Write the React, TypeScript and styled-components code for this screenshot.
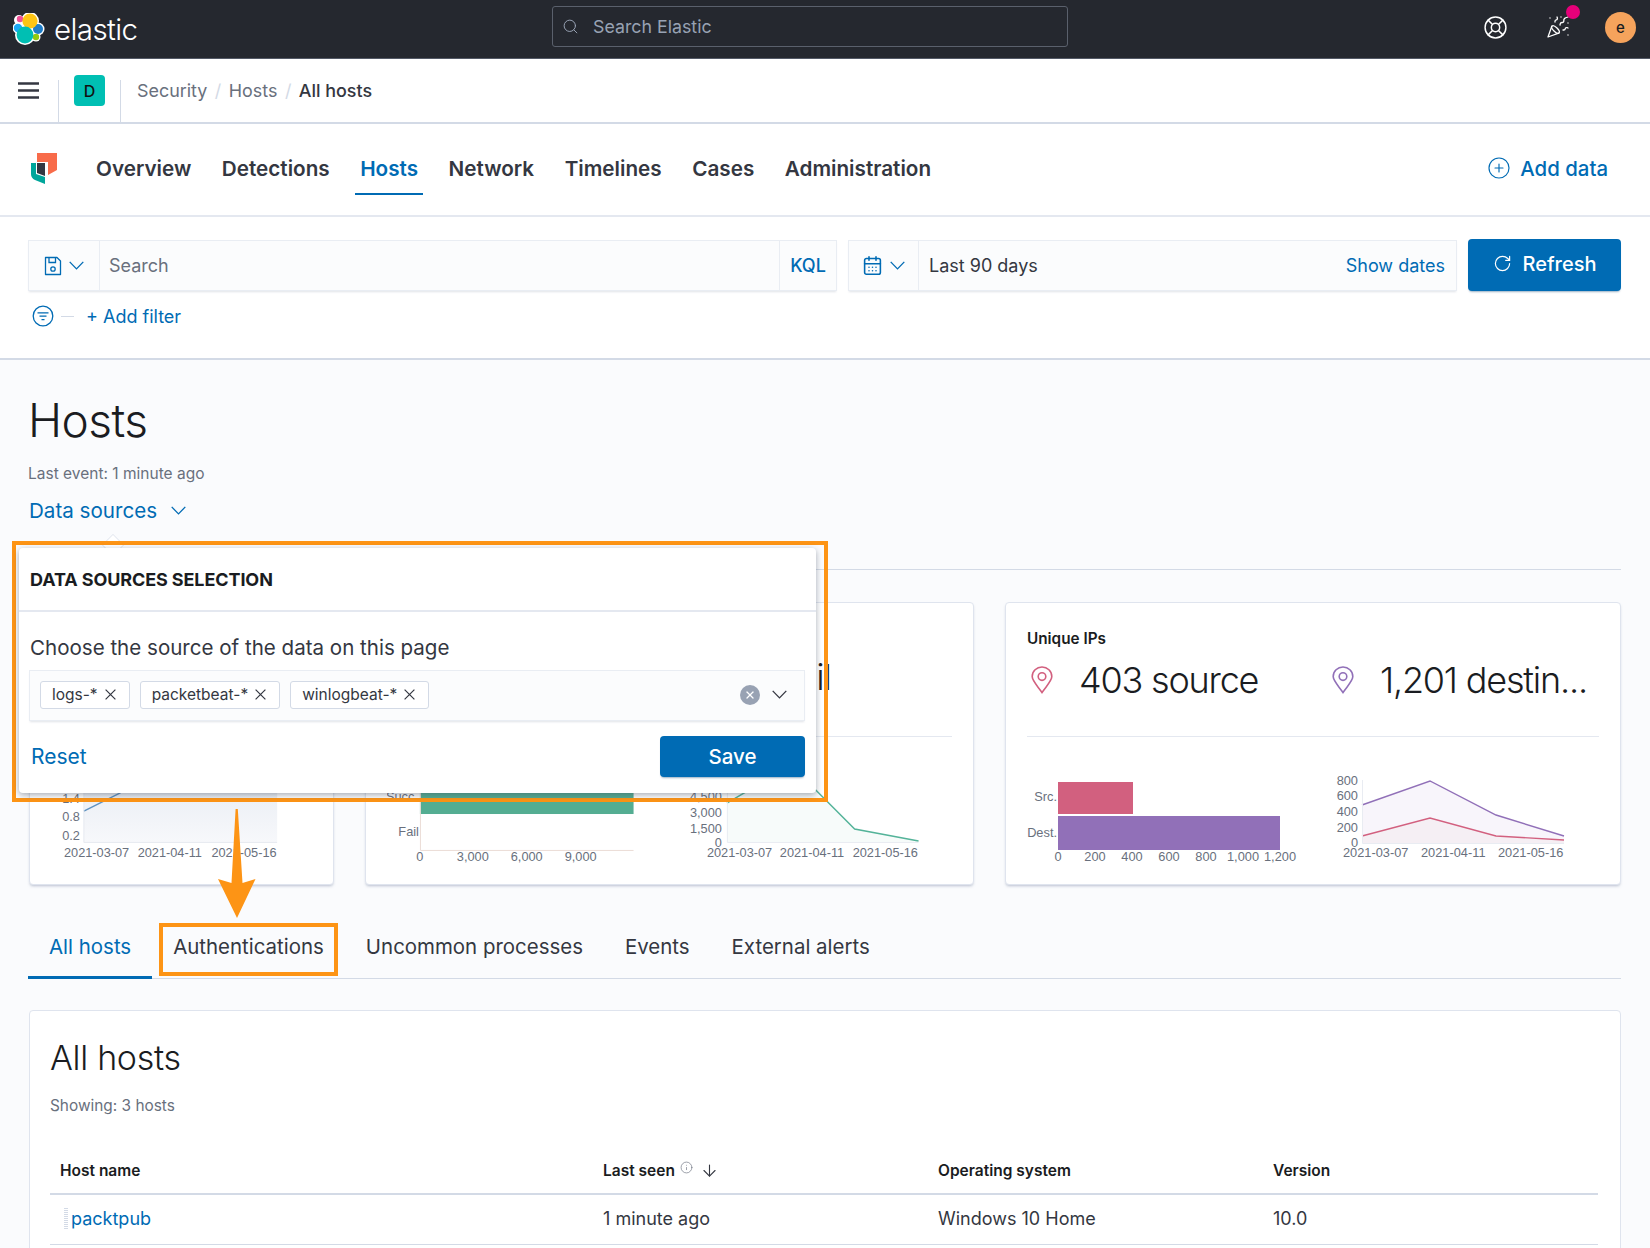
import React from "react";
import styled, { createGlobalStyle } from "styled-components";
import {
  ArrowDown,
  CalendarDays,
  CirclePlus,
  Info,
  LifeBuoy,
  PartyPopper,
  RotateCw,
  Search,
  X,
} from "lucide-react";

const BLUE = "#006bb4";
const ORANGE = "#fd9415";
const INK = "#343741";
const MUTED = "#69707d";
const LINE = "#d3dae6";

const GlobalStyle = createGlobalStyle`
  html, body {
    margin: 0;
    padding: 0;
    background: #fff;
    font-family: Inter, "Liberation Sans", sans-serif;
    color: ${INK};
  }
  * { box-sizing: border-box; }
`;

const ElasticLogo = () => (
  <svg width="32" height="32" viewBox="13 12 32 32">
    <circle cx="30" cy="20" r="9" fill="#fff" />
    <circle cx="25" cy="34" r="10" fill="#fff" />
    <circle cx="19" cy="19" r="5" fill="#fff" />
    <circle cx="18" cy="27" r="5.5" fill="#fff" />
    <circle cx="38" cy="28" r="6.5" fill="#fff" />
    <circle cx="36" cy="36" r="4.5" fill="#fff" />
    <circle cx="20" cy="18" r="3.2" fill="#ee5097" />
    <circle cx="18" cy="27" r="4.2" fill="#1ba9f5" />
    <circle cx="38" cy="28" r="5" fill="#1e7dc8" />
    <circle cx="36" cy="36" r="3.2" fill="#93c90e" />
    <circle cx="30" cy="20" r="7.6" fill="#fec514" />
    <circle cx="25" cy="34" r="8.4" fill="#00bfb3" />
  </svg>
);

const SecurityLogo = () => (
  <svg width="26" height="32" viewBox="31 154 26 32">
    <path d="M37 154H57V171L48 176V163H37Z" fill="#f86b4a" />
    <path d="M31 164H36V175L45 178V185L35 181Q31 179 31 175Z" fill="#00a69b" />
    <path d="M37 164H45V177L37 174Z" fill="#343741" />
  </svg>
);

const Hamburger = () => (
  <svg width="21" height="17" viewBox="0 0 21 17" fill="none" stroke={INK} strokeWidth="2.4">
    <path d="M0 1.5H21M0 8.5H21M0 15.5H21" />
  </svg>
);

const Chevron = ({ color = BLUE, width = 15 }: { color?: string; width?: number }) => (
  <svg width={width} height={width * 0.6} viewBox="0 0 15 9" fill="none" stroke={color} strokeWidth="1.3">
    <path d="M0.7 0.9L7.5 7.9L14.3 0.9" />
  </svg>
);

const Cross = () => (
  <svg width="11" height="11" viewBox="0 0 11 11" fill="none" stroke={INK} strokeWidth="1.2">
    <path d="M0.6 0.6L10.4 10.4M10.4 0.6L0.6 10.4" />
  </svg>
);

const FloppyIcon = () => (
  <svg width="18" height="20" viewBox="0 0 18 20" fill="none" stroke={BLUE} strokeWidth="1.3">
    <path d="M1.5 1.5H13L16.5 5V18.5H1.5Z" strokeLinejoin="round" />
    <path d="M5 1.5V6.5H11.5V1.5" />
    <circle cx="9" cy="13" r="2.2" />
  </svg>
);

const FilterIcon = () => (
  <svg width="22" height="22" viewBox="0 0 22 22" fill="none" stroke={BLUE} strokeWidth="1.3">
    <circle cx="11" cy="11" r="9.8" />
    <path d="M5.5 7.8H16.5M7.5 11.2H14.5M9.5 14.6H12.5" />
  </svg>
);

const PinIcon = ({ color }: { color: string }) => (
  <PinSvg width="22" height="28" viewBox="0 0 22 28" fill="none" stroke={color} strokeWidth="1.6">
    <path d="M11 26.5C7 20.5 1.2 15 1.2 10.6C1.2 5.2 5.6 1 11 1C16.4 1 20.8 5.2 20.8 10.6C20.8 15 15 20.5 11 26.5Z" />
    <circle cx="11" cy="10.6" r="3.8" />
  </PinSvg>
);

const HostsChart = () => (
  <svg width="262" height="100" viewBox="51 770 262 100">
    <defs>
      <linearGradient id="hostsFill" x1="0" y1="0" x2="0" y2="1">
        <stop offset="0" stopColor="#e6ebf2" />
        <stop offset="1" stopColor="#f7f8fb" />
      </linearGradient>
    </defs>
    <rect x="84" y="770" width="194" height="72" fill="url(#hostsFill)" />
    <path d="M84 811L120 793L150 770" fill="none" stroke="#6092c0" strokeWidth="1.4" />
    <path d="M84 770V842.5H278" fill="none" stroke="#e6e9f0" />
    <AxisText x="80" y="803" textAnchor="end">1.4</AxisText>
    <AxisText x="80" y="821" textAnchor="end">0.8</AxisText>
    <AxisText x="80" y="840" textAnchor="end">0.2</AxisText>
    <AxisText x="64" y="857">2021-03-07</AxisText>
    <AxisText x="138" y="857">2021-04-11</AxisText>
    <AxisText x="212" y="857">2021-05-16</AxisText>
  </svg>
);

const AuthBars = () => (
  <svg width="273" height="100" viewBox="387 770 273 100">
    <rect x="420" y="770" width="214" height="44" fill="#54ad92" />
    <path d="M420.5 770V850.5H634" fill="none" stroke="#ebdcd6" />
    <AxisText x="418" y="801" textAnchor="end">Succ.</AxisText>
    <AxisText x="419" y="836" textAnchor="end">Fail</AxisText>
    <AxisText x="420" y="861" textAnchor="middle">0</AxisText>
    <AxisText x="473" y="861" textAnchor="middle">3,000</AxisText>
    <AxisText x="527" y="861" textAnchor="middle">6,000</AxisText>
    <AxisText x="581" y="861" textAnchor="middle">9,000</AxisText>
  </svg>
);

const AuthLines = () => (
  <svg width="293" height="100" viewBox="660 770 293 100">
    <path d="M727 803L756 786L812 786L855 829L919 841V842H727Z" fill="#f7fbfa" />
    <path d="M727 803L756 786L812 786L855 829L919 841" fill="none" stroke="#54b399" strokeWidth="1.4" />
    <path d="M727.5 780V842.5H919" fill="none" stroke="#e9ecf2" />
    <AxisText x="722" y="801" textAnchor="end">4,500</AxisText>
    <AxisText x="722" y="817" textAnchor="end">3,000</AxisText>
    <AxisText x="722" y="833" textAnchor="end">1,500</AxisText>
    <AxisText x="722" y="847" textAnchor="end">0</AxisText>
    <AxisText x="707" y="857">2021-03-07</AxisText>
    <AxisText x="780" y="857">2021-04-11</AxisText>
    <AxisText x="853" y="857">2021-05-16</AxisText>
  </svg>
);

const IpBars = () => (
  <svg width="293" height="100" viewBox="1027 770 293 100">
    <rect x="1058" y="782" width="75" height="32" fill="#d2607f" />
    <rect x="1058" y="816" width="222" height="34" fill="#9170b8" />
    <AxisText x="1057" y="801" textAnchor="end">Src.</AxisText>
    <AxisText x="1057" y="837" textAnchor="end">Dest.</AxisText>
    {[
      [1058, "0"],
      [1095, "200"],
      [1132, "400"],
      [1169, "600"],
      [1206, "800"],
      [1243, "1,000"],
      [1280, "1,200"],
    ].map(([x, label]) => (
      <AxisText key={label} x={x} y="861" textAnchor="middle">
        {label}
      </AxisText>
    ))}
  </svg>
);

const IpLines = () => (
  <svg width="263" height="100" viewBox="1335 770 263 100">
    <path d="M1362 805L1430 781L1496 815L1564 836V843H1362Z" fill="#f8f5fb" />
    <path d="M1362 836L1430 818L1496 836L1564 840V843H1362Z" fill="#f5eff4" />
    <path d="M1362 805L1430 781L1496 815L1564 836" fill="none" stroke="#9170b8" strokeWidth="1.4" />
    <path d="M1362 836L1430 818L1496 836L1564 840" fill="none" stroke="#d2607f" strokeWidth="1.4" />
    <path d="M1362.5 780V843.5H1564" fill="none" stroke="#e9ecf2" />
    <AxisText x="1358" y="785" textAnchor="end">800</AxisText>
    <AxisText x="1358" y="800" textAnchor="end">600</AxisText>
    <AxisText x="1358" y="816" textAnchor="end">400</AxisText>
    <AxisText x="1358" y="832" textAnchor="end">200</AxisText>
    <AxisText x="1358" y="847" textAnchor="end">0</AxisText>
    <AxisText x="1343" y="857">2021-03-07</AxisText>
    <AxisText x="1421" y="857">2021-04-11</AxisText>
    <AxisText x="1498" y="857">2021-05-16</AxisText>
  </svg>
);

export default function App() {
  return (
    <Page>
      <GlobalStyle />
      <TopBar>
        <Brand>
          <ElasticLogo />
          <BrandName>elastic</BrandName>
        </Brand>
        <GlobalSearch>
          <Search size={17} strokeWidth={1.4} color="#98a2b3" />
          Search Elastic
        </GlobalSearch>
        <TopIcons>
          <LifeBuoy size={25} strokeWidth={1.4} color="#fff" />
          <NewsIcon>
            <PartyPopper size={24} strokeWidth={1.3} color="#fff" />
            <NewsDot />
          </NewsIcon>
          <Avatar>e</Avatar>
        </TopIcons>
      </TopBar>

      <CrumbBar>
        <MenuCell>
          <Hamburger />
        </MenuCell>
        <SpaceCell>
          <SpaceBadge>D</SpaceBadge>
        </SpaceCell>
        <Crumbs>
          <Crumb>Security</Crumb>
          <CrumbSlash>/</CrumbSlash>
          <Crumb>Hosts</Crumb>
          <CrumbSlash>/</CrumbSlash>
          <Crumb $current>All hosts</Crumb>
        </Crumbs>
      </CrumbBar>

      <SubNav>
        <SecurityLogo />
        <NavTabs>
          <NavTab>Overview</NavTab>
          <NavTab>Detections</NavTab>
          <NavTab $active>Hosts</NavTab>
          <NavTab>Network</NavTab>
          <NavTab>Timelines</NavTab>
          <NavTab>Cases</NavTab>
          <NavTab>Administration</NavTab>
        </NavTabs>
        <AddData>
          <CirclePlus size={24} strokeWidth={1.15} color={BLUE} />
          Add data
        </AddData>
      </SubNav>

      <QuerySection>
        <QueryRow>
          <SearchGroup>
            <Prepend $width={71}>
              <FloppyIcon />
              <Chevron />
            </Prepend>
            <QueryInput>Search</QueryInput>
            <KqlCell>KQL</KqlCell>
          </SearchGroup>
          <DateGroup>
            <Prepend $width={70}>
              <CalendarDays size={21} strokeWidth={1.8} color={BLUE} />
              <Chevron />
            </Prepend>
            <DateValue>Last 90 days</DateValue>
            <ShowDates>Show dates</ShowDates>
          </DateGroup>
          <RefreshButton>
            <RotateCw size={19} strokeWidth={1.5} color="#fff" />
            Refresh
          </RefreshButton>
        </QueryRow>
        <FilterRow>
          <FilterIcon />
          <FilterDash />
          <AddFilter>+ Add filter</AddFilter>
        </FilterRow>
      </QuerySection>

      <Main>
        <PageTitle>Hosts</PageTitle>
        <LastEvent>Last event: 1 minute ago</LastEvent>
        <DataSources>
          Data sources
          <Chevron />
        </DataSources>
        <Rule />

        <Cards>
          <Card>
            <StatRow />
            <CardRule />
            <ChartRow>
              <HostsChart />
            </ChartRow>
          </Card>
          <Card>
            <StatRow>
              <FailStat>0 fail</FailStat>
            </StatRow>
            <CardRule />
            <ChartRow>
              <AuthBars />
              <AuthLines />
            </ChartRow>
          </Card>
          <Card>
            <CardTitle>Unique IPs</CardTitle>
            <IpStats>
              <IpStat $width={301}>
                <PinIcon color="#d2607f" />
                <StatValue>403 source</StatValue>
              </IpStat>
              <IpStat $width={266}>
                <PinIcon color="#9170b8" />
                <StatValue>1,201 destin...</StatValue>
              </IpStat>
            </IpStats>
            <CardRule />
            <ChartRow $gap={15}>
              <IpBars />
              <IpLines />
            </ChartRow>
          </Card>
        </Cards>

        <Tabs>
          <Tab $active>All hosts</Tab>
          <Tab $highlight>Authentications</Tab>
          <Tab>Uncommon processes</Tab>
          <Tab>Events</Tab>
          <Tab>External alerts</Tab>
        </Tabs>

        <TablePanel>
          <TableTitle>All hosts</TableTitle>
          <Showing>Showing: 3 hosts</Showing>
          <HeadRow>
            <HeadCell>Host name</HeadCell>
            <HeadCell>
              Last seen
              <InfoMark>
                <Info size={13} strokeWidth={1.2} color={MUTED} />
              </InfoMark>
              <ArrowDown size={19} strokeWidth={1.4} color={INK} />
            </HeadCell>
            <HeadCell>Operating system</HeadCell>
            <HeadCell>Version</HeadCell>
          </HeadRow>
          <BodyRow>
            <HostCell>
              <DragHandle />
              <HostLink>packtpub</HostLink>
            </HostCell>
            <BodyCell>1 minute ago</BodyCell>
            <BodyCell>Windows 10 Home</BodyCell>
            <BodyCell>10.0</BodyCell>
          </BodyRow>
        </TablePanel>
      </Main>

      <PopoverBeak />
      <CalloutFrame>
        <Popover>
          <PopoverTitle>DATA SOURCES SELECTION</PopoverTitle>
          <PopoverBody>
            <ComboLabel>Choose the source of the data on this page</ComboLabel>
            <ComboBox>
              <Chip>
                logs-* <Cross />
              </Chip>
              <Chip>
                packetbeat-* <Cross />
              </Chip>
              <Chip>
                winlogbeat-* <Cross />
              </Chip>
              <ComboControls>
                <ClearBadge>
                  <X size={12} strokeWidth={2.6} color="#fff" />
                </ClearBadge>
                <Chevron color={INK} />
              </ComboControls>
            </ComboBox>
            <PopoverFooter>
              <ResetLink>Reset</ResetLink>
              <SaveButton>Save</SaveButton>
            </PopoverFooter>
          </PopoverBody>
        </Popover>
      </CalloutFrame>
      <CalloutArrow width="42" height="112" viewBox="216 808 42 112">
        <path d="M235.6 809H237.8L242.5 883L255.5 879L237 918L218 879L231.5 883Z" fill={ORANGE} />
      </CalloutArrow>
    </Page>
  );
}

const Page = styled.div`
  position: relative;
  height: 100vh;
  overflow: hidden;
  background: #fff;
`;

const AxisText = styled.text`
  font-family: "Liberation Sans", Arial, sans-serif;
  font-size: 12.8px;
  fill: ${MUTED};
`;

const PinSvg = styled.svg`
  flex: none;
`;

const TopBar = styled.header`
  display: flex;
  align-items: center;
  height: 59px;
  background: #25282f;
  border-bottom: 1px solid #535966;
`;

const Brand = styled.div`
  display: flex;
  align-items: center;
  gap: 9px;
  width: 552px;
  padding-left: 13px;
`;

const BrandName = styled.span`
  font-size: 29.5px;
  font-weight: 300;
  letter-spacing: -0.6px;
  color: #fff;
`;

const GlobalSearch = styled.div`
  display: flex;
  align-items: center;
  gap: 14px;
  width: 516px;
  height: 41px;
  margin-top: -5px;
  padding-left: 9px;
  border: 1px solid #5a606c;
  border-radius: 3px;
  font-size: 17.8px;
  color: #98a2b3;
`;

const TopIcons = styled.div`
  display: flex;
  align-items: center;
  gap: 38px;
  margin-left: auto;
  padding-right: 14px;
  margin-top: -4px;
`;

const NewsIcon = styled.div`
  position: relative;
  display: flex;
`;

const NewsDot = styled.span`
  position: absolute;
  top: -10px;
  right: -10px;
  width: 14px;
  height: 14px;
  border-radius: 50%;
  background: #e6007a;
`;

const Avatar = styled.div`
  display: flex;
  align-items: center;
  justify-content: center;
  width: 31px;
  height: 31px;
  margin-left: -3px;
  border-radius: 50%;
  background: #f5a35c;
  font-size: 15px;
  font-weight: 500;
  color: #1a1c21;
`;

const CrumbBar = styled.div`
  display: flex;
  align-items: flex-end;
  height: 65px;
  border-bottom: 2px solid ${LINE};
`;

const MenuCell = styled.div`
  display: flex;
  align-items: center;
  justify-content: center;
  width: 59px;
  height: 42px;
  padding: 0 2px 21px 0;
  border-right: 1px solid ${LINE};
`;

const SpaceCell = styled.div`
  display: flex;
  justify-content: center;
  width: 62px;
  height: 42px;
  border-right: 1px solid ${LINE};
`;

const SpaceBadge = styled.div`
  display: flex;
  align-items: center;
  justify-content: center;
  width: 31px;
  height: 31px;
  margin-top: -5px;
  border-radius: 4px;
  background: #00bfb3;
  font-size: 16px;
  font-weight: 500;
  color: #111;
`;

const Crumbs = styled.nav`
  display: flex;
  align-items: center;
  align-self: center;
  gap: 7.5px;
  padding-left: 16px;
  font-size: 17.9px;
`;

const Crumb = styled.span<{ $current?: boolean }>`
  color: ${(p) => (p.$current ? INK : MUTED)};
  font-weight: ${(p) => (p.$current ? 500 : 400)};
`;

const CrumbSlash = styled.span`
  color: ${LINE};
`;

const SubNav = styled.div`
  display: flex;
  align-items: flex-start;
  height: 93px;
  padding: 29px 42px 0 31px;
  border-bottom: 2px solid #e4e8f0;
`;

const NavTabs = styled.nav`
  display: flex;
  gap: 20.5px;
  margin: 4px 0 0 34px;
`;

const NavTab = styled.a<{ $active?: boolean }>`
  padding: 0 5px 12px;
  line-height: 24px;
  font-size: 20.7px;
  font-weight: 600;
  color: ${(p) => (p.$active ? BLUE : INK)};
  border-bottom: 2px solid ${(p) => (p.$active ? BLUE : "transparent")};
`;

const AddData = styled.a`
  display: flex;
  align-items: center;
  gap: 9px;
  height: 24px;
  margin: 3px 0 0 auto;
  font-size: 20.4px;
  font-weight: 500;
  color: ${BLUE};
`;

const QuerySection = styled.section`
  height: 143px;
  padding: 23px 29px 0 28px;
  border-bottom: 2px solid ${LINE};
`;

const QueryRow = styled.div`
  display: flex;
  gap: 11px;
  height: 51px;
`;

const FieldGroup = styled.div`
  display: flex;
  align-items: stretch;
  background: #fbfcfd;
  border: 1px solid #e9edf3;
  box-shadow: 0 2px 2px -1px rgba(152, 162, 179, 0.3);
`;

const SearchGroup = styled(FieldGroup)`
  width: 809px;
`;

const DateGroup = styled(FieldGroup)`
  flex: 1;
`;

const Prepend = styled.div<{ $width: number }>`
  display: flex;
  align-items: center;
  justify-content: center;
  gap: 7px;
  width: ${(p) => p.$width}px;
  padding-right: 1px;
  border-right: 1px solid #e9edf3;
`;

const QueryInput = styled.div`
  flex: 1;
  align-self: center;
  padding-left: 9px;
  font-size: 18px;
  color: ${MUTED};
`;

const KqlCell = styled.div`
  display: flex;
  align-items: center;
  justify-content: center;
  width: 57px;
  border-left: 1px solid #e9edf3;
  font-size: 18px;
  font-weight: 500;
  color: ${BLUE};
`;

const DateValue = styled.div`
  flex: 1;
  align-self: center;
  padding-left: 10px;
  font-size: 18px;
  color: ${INK};
`;

const ShowDates = styled.a`
  align-self: center;
  padding-right: 11px;
  font-size: 18px;
  color: ${BLUE};
`;

const RefreshButton = styled.button`
  display: flex;
  align-items: center;
  justify-content: center;
  gap: 11px;
  width: 153px;
  height: 52px;
  margin-top: -1px;
  padding-bottom: 4px;
  border: 0;
  border-radius: 4px;
  background: ${BLUE};
  box-shadow: 0 2px 2px -1px rgba(0, 60, 110, 0.4);
  font: 500 20px Inter, sans-serif;
  color: #fff;
`;

const FilterRow = styled.div`
  display: flex;
  align-items: center;
  height: 22px;
  margin-top: 14px;
  padding-left: 4px;
`;

const FilterDash = styled.span`
  width: 13px;
  height: 1px;
  margin: 0 12px 0 7px;
  background: ${LINE};
`;

const AddFilter = styled.a`
  font-size: 18px;
  color: ${BLUE};
`;

const Main = styled.main`
  height: 888px;
  padding: 32px 29px 0 28px;
  background: #fafbfd;
`;

const PageTitle = styled.h1`
  margin: 0;
  line-height: 56px;
  font-size: 46px;
  font-weight: 300;
  letter-spacing: -0.5px;
  color: #1a1c21;
`;

const LastEvent = styled.div`
  margin-top: 16px;
  line-height: 20px;
  font-size: 15.5px;
  color: ${MUTED};
`;

const DataSources = styled.a`
  display: flex;
  align-items: center;
  gap: 14px;
  height: 26px;
  margin: 13px 0 0 1px;
  font-size: 20.6px;
  color: ${BLUE};
`;

const Rule = styled.hr`
  margin: 46px 0 0;
  border: 0;
  border-top: 1px solid ${LINE};
`;

const Cards = styled.div`
  display: grid;
  grid-template-columns: 305px 609px 1fr;
  gap: 31px;
  height: 283px;
  margin: 32px 0 0 1px;
`;

const Card = styled.article`
  padding: 27px 21px 0;
  background: #fff;
  border: 1px solid #dfe4ee;
  border-radius: 4px;
  box-shadow: 0 2px 3px -1px rgba(130, 142, 170, 0.55);
`;

const StatRow = styled.div`
  display: flex;
  height: 106px;
  padding-top: 24px;
`;

const FailStat = styled.span`
  margin-left: 370px;
  font-size: 36px;
  font-weight: 300;
  letter-spacing: -1.2px;
  line-height: 46px;
  color: #1a1c21;
`;

const CardTitle = styled.h3`
  margin: 0;
  line-height: 18px;
  font-size: 15.3px;
  font-weight: 600;
  color: #1a1c21;
`;

const IpStats = styled.div`
  display: flex;
  align-items: center;
  height: 88px;
  padding-bottom: 25px;
`;

const IpStat = styled.div<{ $width: number }>`
  display: flex;
  align-items: center;
  gap: 26px;
  width: ${(p) => p.$width}px;
  flex: none;
  padding-left: 4px;
`;

const StatValue = styled.span`
  font-size: 36px;
  font-weight: 300;
  letter-spacing: -1.2px;
  white-space: nowrap;
  color: #1a1c21;
`;

const CardRule = styled.hr`
  margin: 0;
  border: 0;
  border-top: 1px solid #e4e8f0;
`;

const ChartRow = styled.div<{ $gap?: number }>`
  display: flex;
  gap: ${(p) => p.$gap ?? 0}px;
  margin-top: 33px;
`;

const Tabs = styled.div`
  display: flex;
  height: 58px;
  margin-top: 36px;
  border-bottom: 1px solid ${LINE};
`;

const Tab = styled.a<{ $active?: boolean; $highlight?: boolean }>`
  position: relative;
  height: 58px;
  padding: 12px 21px 0;
  line-height: 28px;
  font-size: 20.45px;
  color: ${(p) => (p.$active ? BLUE : INK)};
  border-bottom: 3px solid ${(p) => (p.$active ? BLUE : "transparent")};

  ${(p) =>
    p.$highlight &&
    `&::after {
      content: "";
      position: absolute;
      inset: 2px 7px 0;
      border: 4px solid ${ORANGE};
    }`}
`;

const TablePanel = styled.section`
  height: 260px;
  margin: 31px 0 0 1px;
  padding: 25px 22px 0 20px;
  background: #fff;
  border: 1px solid #dfe4ee;
  border-radius: 4px;
`;

const TableTitle = styled.h2`
  margin: 0;
  line-height: 44px;
  font-size: 34px;
  font-weight: 300;
  letter-spacing: -0.3px;
  color: #1a1c21;
`;

const Showing = styled.div`
  margin-top: 16px;
  line-height: 20px;
  font-size: 15.4px;
  color: ${MUTED};
`;

const TableGrid = styled.div`
  display: grid;
  grid-template-columns: 543px 335px 335px 1fr;
`;

const HeadRow = styled(TableGrid)`
  margin-top: 42px;
  padding-bottom: 11px;
  border-bottom: 2px solid ${LINE};
`;

const HeadCell = styled.div`
  display: flex;
  align-items: center;
  gap: 5px;
  height: 24px;
  padding-left: 10px;
  font-size: 15.5px;
  font-weight: 600;
  color: #1a1c21;
`;

const InfoMark = styled.span`
  display: flex;
  margin: -6px 2px 0 0;
`;

const BodyRow = styled(TableGrid)`
  height: 50px;
  padding-bottom: 2px;
  align-items: center;
  border-bottom: 1px solid ${LINE};
`;

const BodyCell = styled.div`
  padding-left: 10px;
  font-size: 18px;
  color: ${INK};
`;

const HostCell = styled(BodyCell)`
  display: flex;
  align-items: center;
  gap: 3px;
  padding-left: 14px;
`;

const DragHandle = styled.span`
  width: 4px;
  height: 22px;
  background: repeating-linear-gradient(${LINE} 0 1px, transparent 1px 2px);
`;

const HostLink = styled.a`
  color: ${BLUE};
`;

const PopoverBeak = styled.span`
  position: absolute;
  top: 537px;
  left: 105px;
  width: 16px;
  height: 16px;
  background: #fff;
  border: 1px solid #e4e8f0;
  transform: rotate(45deg);
`;

const CalloutFrame = styled.div`
  position: absolute;
  top: 541px;
  left: 12px;
  width: 816px;
  height: 261px;
  padding: 3px 8px 5px 3px;
  border: 4px solid ${ORANGE};
`;

const Popover = styled.div`
  height: 100%;
  background: #fff;
  border-radius: 4px;
  box-shadow: 0 2px 6px rgba(60, 70, 90, 0.45);
`;

const PopoverTitle = styled.h4`
  display: flex;
  align-items: center;
  height: 64px;
  margin: 0;
  padding: 0 11px;
  border-bottom: 2px solid #e4e8f0;
  font-size: 18px;
  font-weight: 700;
  letter-spacing: -0.1px;
  color: #1a1c21;
`;

const PopoverBody = styled.div`
  padding: 22px 11px 0 11px;
`;

const ComboLabel = styled.div`
  line-height: 28px;
  font-size: 20.55px;
  color: ${INK};
`;

const ComboBox = styled.div`
  display: flex;
  align-items: center;
  gap: 10px;
  height: 51px;
  margin: 8px 0 0 -1px;
  padding: 0 17px 2px 10px;
  background: #fbfcfd;
  border: 1px solid #e9edf3;
  box-shadow: 0 2px 2px -1px rgba(152, 162, 179, 0.3);
`;

const Chip = styled.span`
  display: flex;
  align-items: center;
  gap: 7px;
  height: 28px;
  padding: 0 13px 0 11px;
  background: #fff;
  border: 1px solid ${LINE};
  border-radius: 3px;
  font-size: 15.5px;
  color: ${INK};
`;

const ComboControls = styled.div`
  display: flex;
  align-items: center;
  gap: 12px;
  margin-left: auto;
`;

const ClearBadge = styled.span`
  display: flex;
  align-items: center;
  justify-content: center;
  width: 20px;
  height: 20px;
  border-radius: 50%;
  background: #98a2b3;
`;

const PopoverFooter = styled.div`
  display: flex;
  align-items: center;
  justify-content: space-between;
  margin-top: 15px;
`;

const ResetLink = styled.a`
  margin-left: 1px;
  font-size: 21px;
  color: ${BLUE};
`;

const SaveButton = styled.button`
  width: 145px;
  height: 41px;
  border: 0;
  border-radius: 4px;
  background: ${BLUE};
  box-shadow: 0 2px 2px -1px rgba(0, 60, 110, 0.4);
  font: 500 20.5px Inter, sans-serif;
  color: #fff;
`;

const CalloutArrow = styled.svg`
  position: absolute;
  top: 808px;
  left: 216px;
`;
